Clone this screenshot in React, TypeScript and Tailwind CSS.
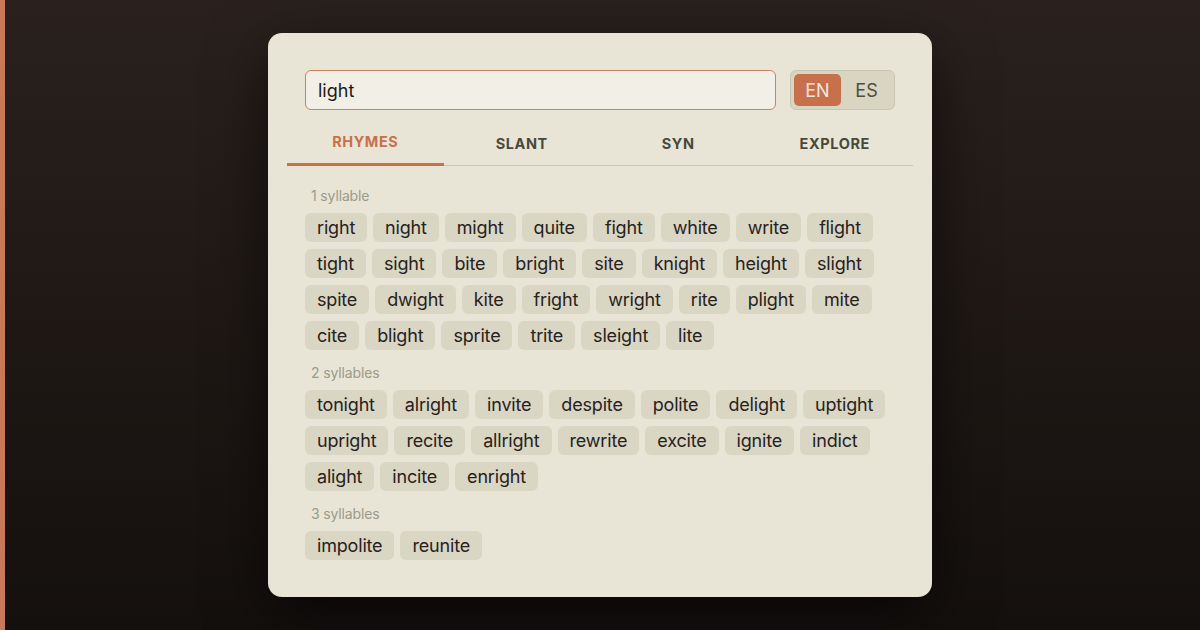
import { useState } from 'react';

const GROUPS = [
  {
    label: '1 syllable',
    words: ['right', 'night', 'might', 'quite', 'fight', 'white', 'write', 'flight', 'tight', 'sight', 'bite', 'bright', 'site', 'knight', 'height', 'slight', 'spite', 'dwight', 'kite', 'fright', 'wright', 'rite', 'plight', 'mite', 'cite', 'blight', 'sprite', 'trite', 'sleight', 'lite'],
  },
  {
    label: '2 syllables',
    words: ['tonight', 'alright', 'invite', 'despite', 'polite', 'delight', 'uptight', 'upright', 'recite', 'allright', 'rewrite', 'excite', 'ignite', 'indict', 'alight', 'incite', 'enright'],
  },
  {
    label: '3 syllables',
    words: ['impolite', 'reunite'],
  },
];

const TABS = ['RHYMES', 'SLANT', 'SYN', 'EXPLORE'];

export default function App() {
  const [query, setQuery] = useState('light');
  const [lang, setLang] = useState<'EN' | 'ES'>('EN');
  const [tab, setTab] = useState('RHYMES');

  return (
    <div
      className="flex h-[630px] w-[1200px] overflow-hidden bg-gradient-to-b from-[#2a211d] to-[#14100e]"
      style={{ fontFamily: 'Inter, "Noto Sans", sans-serif' }}
    >
      <div className="w-[5px] shrink-0 bg-[#c97a55]" />
      <div className="flex-1 pl-[263px] pt-[33px]">
        <div className="h-[564px] w-[664px] rounded-[14px] bg-[#e8e5d7] px-[37px] pt-[37px] shadow-[0_20px_60px_rgba(0,0,0,0.6)]">
          {/* Search row */}
          <div className="flex gap-[14px]">
            <input
              value={query}
              onChange={(e) => setQuery(e.target.value)}
              className="h-[40px] flex-1 rounded-[6px] border-[1.5px] border-[#c98262] bg-[#f2efe6] px-[12px] text-[18px] text-[#1e1a16] focus:outline-none"
            />
            <div className="flex h-[40px] w-[105px] items-center gap-[2px] rounded-[6px] border-[1.5px] border-[#c9c5b2] bg-[#d9d5c3] px-[3px]">
              {(['EN', 'ES'] as const).map((l) => (
                <button
                  key={l}
                  onClick={() => setLang(l)}
                  className={
                    lang === l
                      ? 'flex h-[32px] w-[47px] items-center justify-center rounded-[5px] bg-[#c8704c] text-[18px] text-[#f6e9dd]'
                      : 'flex h-[32px] w-[47px] items-center justify-center rounded-[5px] text-[18px] text-[#4b4e3d]'
                  }
                >
                  {l}
                </button>
              ))}
            </div>
          </div>

          {/* Tabs */}
          <div className="-mx-[18px] mt-[14px] flex border-b-[1.5px] border-[#c9c6b6]">
            {TABS.map((t) => (
              <button
                key={t}
                onClick={() => setTab(t)}
                className={
                  tab === t
                    ? '-mb-[1.5px] flex h-[42px] flex-1 items-center justify-center border-b-[3px] border-[#c8704c] pb-[4px] text-[14.5px] font-bold tracking-[0.04em] text-[#c8704c]'
                    : '-mb-[1.5px] flex h-[42px] flex-1 items-center justify-center border-b-[3px] border-transparent pb-[1px] pt-[2px] text-[14.5px] font-bold tracking-[0.04em] text-[#474a3b]'
                }
              >
                {t}
              </button>
            ))}
          </div>

          {/* Groups */}
          <div className="mt-[21px] flex flex-col gap-[14px]">
            {GROUPS.map((g) => (
              <div key={g.label}>
                <div className="px-[6px] text-[14px] leading-[17px] tracking-[-0.01em] text-[#9c9a8a]">{g.label}</div>
                <div className="mt-[9px] flex flex-wrap gap-x-[6px] gap-y-[7px]">
                  {g.words.map((w) => (
                    <span
                      key={w}
                      className="flex h-[29px] items-center rounded-[6px] bg-[#dad6c4] px-[12px] text-[18px] tracking-[-0.01em] text-[#26221d]"
                    >
                      {w}
                    </span>
                  ))}
                </div>
              </div>
            ))}
          </div>
        </div>
      </div>
    </div>
  );
}
